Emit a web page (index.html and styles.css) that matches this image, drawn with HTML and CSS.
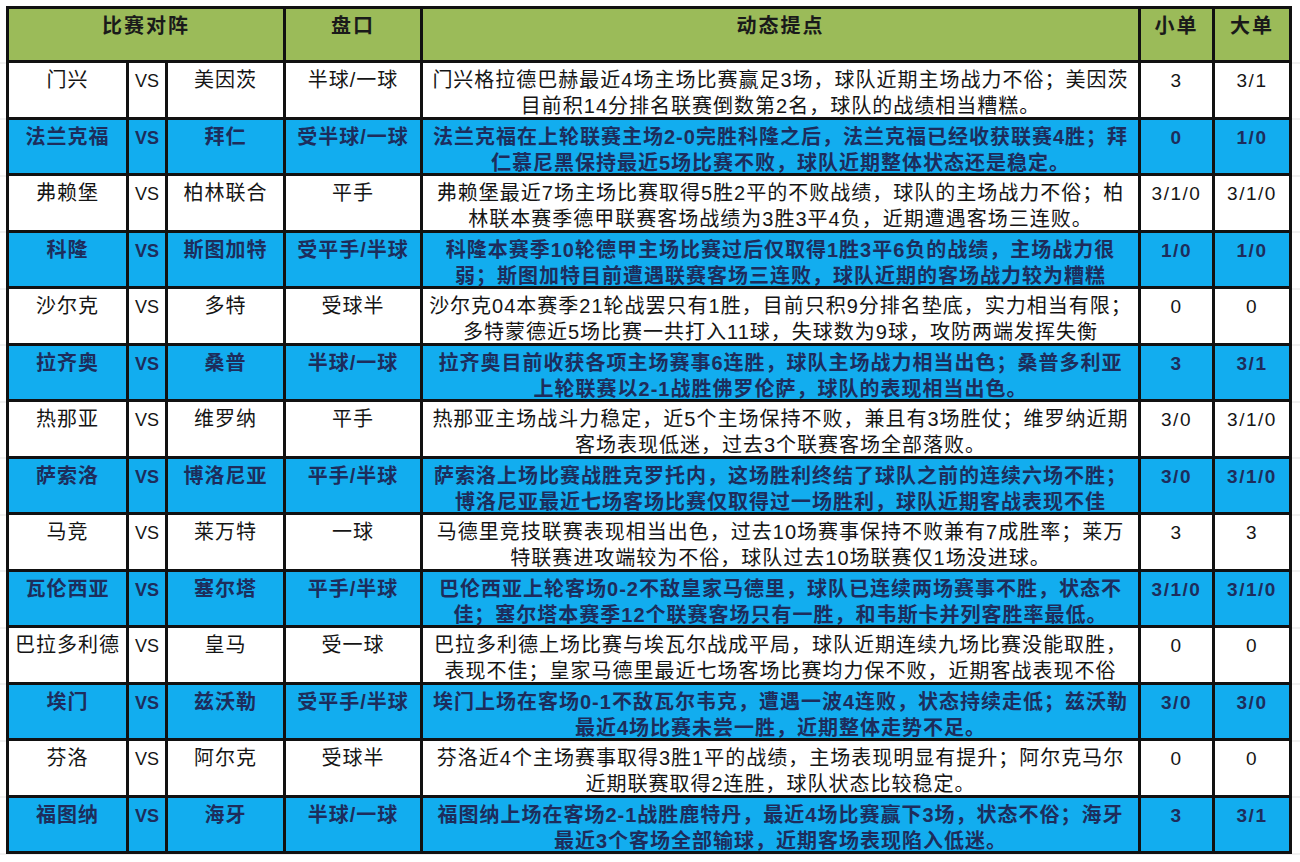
FILE: index.html
```html
<!DOCTYPE html>
<html lang="zh-CN">
<head>
<meta charset="utf-8">
<title>比赛对阵</title>
<link rel="stylesheet" href="styles.css">
</head>
<body>
<div class="page">
  <div class="sheet">
    <div class="row head">
      <div class="cell span3">比赛对阵</div>
      <div class="cell">盘口</div>
      <div class="cell">动态提点</div>
      <div class="cell">小单</div>
      <div class="cell">大单</div>
    </div>

    <div class="row">
      <div class="cell">门兴</div><div class="cell vs">VS</div><div class="cell">美因茨</div>
      <div class="cell">半球/一球</div>
      <div class="cell desc">门兴格拉德巴赫最近4场主场比赛赢足3场，球队近期主场战力不俗；美因茨<br>目前积14分排名联赛倒数第2名，球队的战绩相当糟糕。</div>
      <div class="cell num">3</div><div class="cell num">3/1</div>
    </div>

    <div class="row alt">
      <div class="cell">法兰克福</div><div class="cell vs">VS</div><div class="cell">拜仁</div>
      <div class="cell">受半球/一球</div>
      <div class="cell desc">法兰克福在上轮联赛主场2-0完胜科隆之后，法兰克福已经收获联赛4胜；拜<br>仁慕尼黑保持最近5场比赛不败，球队近期整体状态还是稳定。</div>
      <div class="cell num">0</div><div class="cell num">1/0</div>
    </div>

    <div class="row">
      <div class="cell">弗赖堡</div><div class="cell vs">VS</div><div class="cell">柏林联合</div>
      <div class="cell">平手</div>
      <div class="cell desc">弗赖堡最近7场主场比赛取得5胜2平的不败战绩，球队的主场战力不俗；柏<br>林联本赛季德甲联赛客场战绩为3胜3平4负，近期遭遇客场三连败。</div>
      <div class="cell num">3/1/0</div><div class="cell num">3/1/0</div>
    </div>

    <div class="row alt">
      <div class="cell">科隆</div><div class="cell vs">VS</div><div class="cell">斯图加特</div>
      <div class="cell">受平手/半球</div>
      <div class="cell desc">科隆本赛季10轮德甲主场比赛过后仅取得1胜3平6负的战绩，主场战力很<br>弱；斯图加特目前遭遇联赛客场三连败，球队近期的客场战力较为糟糕</div>
      <div class="cell num">1/0</div><div class="cell num">1/0</div>
    </div>

    <div class="row">
      <div class="cell">沙尔克</div><div class="cell vs">VS</div><div class="cell">多特</div>
      <div class="cell">受球半</div>
      <div class="cell desc">沙尔克04本赛季21轮战罢只有1胜，目前只积9分排名垫底，实力相当有限；<br>多特蒙德近5场比赛一共打入11球，失球数为9球，攻防两端发挥失衡</div>
      <div class="cell num">0</div><div class="cell num">0</div>
    </div>

    <div class="row alt">
      <div class="cell">拉齐奥</div><div class="cell vs">VS</div><div class="cell">桑普</div>
      <div class="cell">半球/一球</div>
      <div class="cell desc">拉齐奥目前收获各项主场赛事6连胜，球队主场战力相当出色；桑普多利亚<br>上轮联赛以2-1战胜佛罗伦萨，球队的表现相当出色。</div>
      <div class="cell num">3</div><div class="cell num">3/1</div>
    </div>

    <div class="row">
      <div class="cell">热那亚</div><div class="cell vs">VS</div><div class="cell">维罗纳</div>
      <div class="cell">平手</div>
      <div class="cell desc">热那亚主场战斗力稳定，近5个主场保持不败，兼且有3场胜仗；维罗纳近期<br>客场表现低迷，过去3个联赛客场全部落败。</div>
      <div class="cell num">3/0</div><div class="cell num">3/1/0</div>
    </div>

    <div class="row alt">
      <div class="cell">萨索洛</div><div class="cell vs">VS</div><div class="cell">博洛尼亚</div>
      <div class="cell">平手/半球</div>
      <div class="cell desc">萨索洛上场比赛战胜克罗托内，这场胜利终结了球队之前的连续六场不胜；<br>博洛尼亚最近七场客场比赛仅取得过一场胜利，球队近期客战表现不佳</div>
      <div class="cell num">3/0</div><div class="cell num">3/1/0</div>
    </div>

    <div class="row">
      <div class="cell">马竞</div><div class="cell vs">VS</div><div class="cell">莱万特</div>
      <div class="cell">一球</div>
      <div class="cell desc">马德里竞技联赛表现相当出色，过去10场赛事保持不败兼有7成胜率；莱万<br>特联赛进攻端较为不俗，球队过去10场联赛仅1场没进球。</div>
      <div class="cell num">3</div><div class="cell num">3</div>
    </div>

    <div class="row alt">
      <div class="cell">瓦伦西亚</div><div class="cell vs">VS</div><div class="cell">塞尔塔</div>
      <div class="cell">平手/半球</div>
      <div class="cell desc">巴伦西亚上轮客场0-2不敌皇家马德里，球队已连续两场赛事不胜，状态不<br>佳；塞尔塔本赛季12个联赛客场只有一胜，和韦斯卡并列客胜率最低。</div>
      <div class="cell num">3/1/0</div><div class="cell num">3/1/0</div>
    </div>

    <div class="row">
      <div class="cell">巴拉多利德</div><div class="cell vs">VS</div><div class="cell">皇马</div>
      <div class="cell">受一球</div>
      <div class="cell desc">巴拉多利德上场比赛与埃瓦尔战成平局，球队近期连续九场比赛没能取胜，<br>表现不佳；皇家马德里最近七场客场比赛均力保不败，近期客战表现不俗</div>
      <div class="cell num">0</div><div class="cell num">0</div>
    </div>

    <div class="row alt">
      <div class="cell">埃门</div><div class="cell vs">VS</div><div class="cell">兹沃勒</div>
      <div class="cell">受平手/半球</div>
      <div class="cell desc">埃门上场在客场0-1不敌瓦尔韦克，遭遇一波4连败，状态持续走低；兹沃勒<br>最近4场比赛未尝一胜，近期整体走势不足。</div>
      <div class="cell num">3/0</div><div class="cell num">3/0</div>
    </div>

    <div class="row">
      <div class="cell">芬洛</div><div class="cell vs">VS</div><div class="cell">阿尔克</div>
      <div class="cell">受球半</div>
      <div class="cell desc">芬洛近4个主场赛事取得3胜1平的战绩，主场表现明显有提升；阿尔克马尔<br>近期联赛取得2连胜，球队状态比较稳定。</div>
      <div class="cell num">0</div><div class="cell num">0</div>
    </div>

    <div class="row alt">
      <div class="cell">福图纳</div><div class="cell vs">VS</div><div class="cell">海牙</div>
      <div class="cell">半球/一球</div>
      <div class="cell desc">福图纳上场在客场2-1战胜鹿特丹，最近4场比赛赢下3场，状态不俗；海牙<br>最近3个客场全部输球，近期客场表现陷入低迷。</div>
      <div class="cell num">3</div><div class="cell num">3/1</div>
    </div>
  </div>
</div>
</body>
</html>
```

FILE: styles.css
```css
html, body {
  margin: 0;
  padding: 0;
  background: #ffffff;
}

.page {
  padding: 6px 0 0 6px;
  min-height: 862px;
  box-sizing: border-box;
  font-family: "Liberation Sans", "Noto Sans CJK SC", sans-serif;
  color: #151515;
  background-image: repeating-linear-gradient(
    to bottom,
    transparent 0,
    transparent 55.5px,
    #e2e2e2 55.5px,
    #e2e2e2 56.5px
  );
  background-position: 0 6.5px;
}

.sheet {
  display: grid;
  grid-template-columns: 120px 39px 118px 137px 718px 74px 77px;
  grid-template-rows: 54px repeat(14, 56.5px);
  width: max-content;
  border-left: 3px solid #111;
  border-top: 3px solid #111;
}

.row {
  display: contents;
}

.cell {
  box-sizing: border-box;
  border-right: 3px solid #111;
  border-bottom: 3px solid #111;
  padding-top: 4px;
  line-height: 26px;
  font-size: 20px;
  letter-spacing: 1px;
  text-align: center;
  white-space: nowrap;
  background: #ffffff;
}

.span3 {
  grid-column: span 3;
}

.head .cell {
  background: #9bbb59;
  font-weight: bold;
  letter-spacing: 2px;
  color: #1a1a1a;
}

.vs {
  font-size: 18px;
  letter-spacing: 0;
  padding-top: 5px;
}

.num {
  font-size: 19px;
  letter-spacing: 1.5px;
  padding-top: 5px;
}

.desc {
  letter-spacing: 1px;
}

.alt .cell {
  background: #12adef;
  font-weight: bold;
  color: #1d2d5c;
}
```
